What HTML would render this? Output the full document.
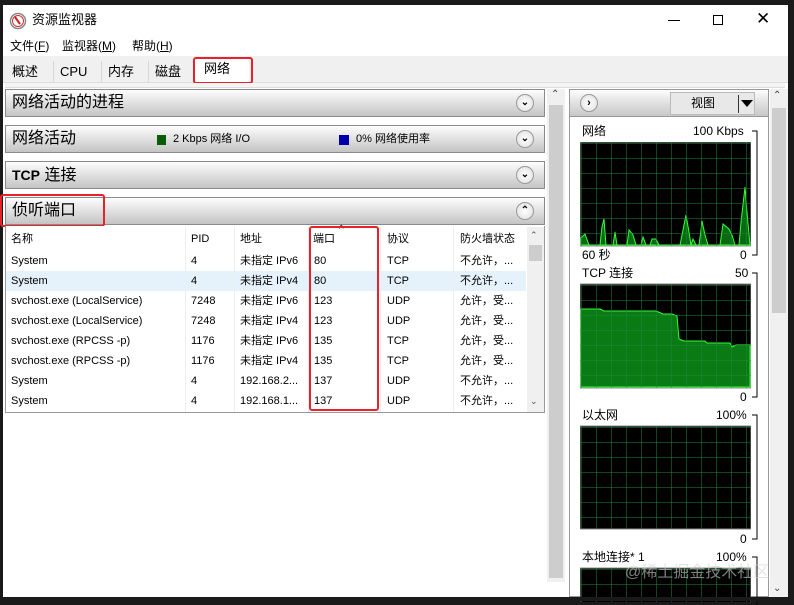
<!DOCTYPE html>
<html><head><meta charset="utf-8"><style>
*{margin:0;padding:0;box-sizing:border-box}
body{width:794px;height:601px;overflow:hidden;background:#1a1a1a;font-family:"Liberation Sans","Noto Sans CJK SC",sans-serif;font-size:12px;color:#000;position:relative;line-height:1.15}
.a{position:absolute}
.win{left:3px;top:5px;width:785px;height:592px;background:#fff}
.hd{position:absolute;left:5px;width:540px;height:28px;border:1px solid #8a8a8a;background:linear-gradient(#fdfdfd,#e6e6e6 40%,#c4c4c4);font-size:16px;line-height:26px;padding:0 0 0 6px}
.cb{position:absolute;right:10px;top:4px;width:18px;height:18px;border-radius:50%;border:1px solid #999;background:radial-gradient(#fff,#ddd);font-size:10px;text-align:center;line-height:16px;font-weight:bold}
.row{position:absolute;left:6px;width:520px;height:20px;font-size:11px;line-height:20px}
.row span{position:absolute}
.red{position:absolute;border:2px solid #e8222a;border-radius:3px}
.lbl{position:absolute;font-size:12px;line-height:14px}
.tab{position:absolute;top:61px;height:21px;font-size:13px;line-height:21px}
</style></head><body>
<div class="a win"></div>
<svg class="a" style="left:9px;top:12px" width="18" height="18"><circle cx="9" cy="9" r="7.5" fill="#fff" stroke="#888" stroke-width="1.5"/><circle cx="9" cy="9" r="5.5" fill="none" stroke="#c33" stroke-width="1"/><path d="M6 5 L11 12" stroke="#c22" stroke-width="2"/></svg>
<div class="a" style="left:32px;top:13px;font-size:13px">资源监视器</div>
<div class="a" style="left:668px;top:20px;width:12px;height:1px;background:#000"></div>
<div class="a" style="left:713px;top:15px;width:10px;height:10px;border:1px solid #000"></div>
<div class="a" style="left:756px;top:9px;font-size:17px;font-weight:300">✕</div>
<div class="a" style="left:10px;top:40px;font-size:12px">文件(<u>F</u>)</div>
<div class="a" style="left:62px;top:40px;font-size:12px">监视器(<u>M</u>)</div>
<div class="a" style="left:132px;top:40px;font-size:12px">帮助(<u>H</u>)</div>
<div class="a" style="left:3px;top:56px;width:785px;height:27px;background:#f0f0f0;border-bottom:1px solid #ddd"></div>
<div class="tab" style="left:5px;width:49px;border-right:1px solid #d8d8d8;padding-left:7px">概述</div>
<div class="tab" style="left:54px;width:48px;border-right:1px solid #d8d8d8;padding-left:6px">CPU</div>
<div class="tab" style="left:102px;width:47px;border-right:1px solid #d8d8d8;padding-left:6px">内存</div>
<div class="tab" style="left:149px;width:44px;padding-left:6px">磁盘</div>
<div class="a" style="left:195px;top:58px;width:54px;height:25px;background:#fff;font-size:13px;line-height:22px;padding-left:9px">网络</div>
<div class="red" style="left:193px;top:57px;width:60px;height:27px"></div>
<div class="a" style="left:5px;top:83px;width:780px;height:5px;background:#f4f4f4;border-bottom:1px solid #ddd"></div>
<div class="hd" style="top:89px">网络活动的进程<div class="cb">⌄</div></div>
<div class="hd" style="top:125px">网络活动
<span class="a" style="left:151px;top:9px;width:9px;height:10px;background:#0a5a0a;border:1px solid #060"></span>
<span class="a" style="left:167px;top:0;font-size:11px">2 Kbps 网络 I/O</span>
<span class="a" style="left:333px;top:9px;width:10px;height:10px;background:#0000aa"></span>
<span class="a" style="left:350px;top:0;font-size:11px">0% 网络使用率</span>
<div class="cb">⌄</div></div>
<div class="hd" style="top:161px"><b style="font-size:14px">TCP</b> 连接<div class="cb">⌄</div></div>
<div class="hd" style="top:197px">侦听端口<div class="cb">⌃</div></div>
<div class="red" style="left:0px;top:194px;width:105px;height:33px"></div>
<div class="a" style="left:5px;top:226px;width:540px;height:187px;border:1px solid #999;border-top:none;background:#fff"></div>
<div class="a" style="left:6px;top:271px;width:520px;height:20px;background:#e5f1fb"></div>
<div class="a" style="left:185px;top:227px;width:1px;height:185px;background:#eee"></div>
<div class="a" style="left:234px;top:227px;width:1px;height:185px;background:#eee"></div>
<div class="a" style="left:308px;top:227px;width:1px;height:185px;background:#eee"></div>
<div class="a" style="left:380px;top:227px;width:1px;height:185px;background:#eee"></div>
<div class="a" style="left:453px;top:227px;width:1px;height:185px;background:#eee"></div>
<div class="a" style="left:527px;top:227px;width:17px;height:185px;background:#f0f0f0"></div>
<div class="a" style="left:529px;top:245px;width:13px;height:16px;background:#cdcdcd"></div>
<div class="a" style="left:530px;top:230px;font-size:9px;color:#555">⌃</div>
<div class="a" style="left:530px;top:396px;font-size:9px;color:#555">⌄</div>
<div class="row" style="top:229px"><span style="left:5px">名称</span><span style="left:185px">PID</span><span style="left:234px">地址</span><span style="left:307px">端口</span><span style="left:333px;top:-9px;font-size:10px">^</span><span style="left:381px">协议</span><span style="left:454px">防火墙状态</span></div>
<div class="row" style="top:251px"><span style="left:5px">System</span><span style="left:185px">4</span><span style="left:234px">未指定 IPv6</span><span style="left:308px">80</span><span style="left:381px">TCP</span><span style="left:454px">不允许，...</span></div>
<div class="row" style="top:271px"><span style="left:5px">System</span><span style="left:185px">4</span><span style="left:234px">未指定 IPv4</span><span style="left:308px">80</span><span style="left:381px">TCP</span><span style="left:454px">不允许，...</span></div>
<div class="row" style="top:291px"><span style="left:5px">svchost.exe (LocalService)</span><span style="left:185px">7248</span><span style="left:234px">未指定 IPv6</span><span style="left:308px">123</span><span style="left:381px">UDP</span><span style="left:454px">允许，受...</span></div>
<div class="row" style="top:311px"><span style="left:5px">svchost.exe (LocalService)</span><span style="left:185px">7248</span><span style="left:234px">未指定 IPv4</span><span style="left:308px">123</span><span style="left:381px">UDP</span><span style="left:454px">允许，受...</span></div>
<div class="row" style="top:331px"><span style="left:5px">svchost.exe (RPCSS -p)</span><span style="left:185px">1176</span><span style="left:234px">未指定 IPv6</span><span style="left:308px">135</span><span style="left:381px">TCP</span><span style="left:454px">允许，受...</span></div>
<div class="row" style="top:351px"><span style="left:5px">svchost.exe (RPCSS -p)</span><span style="left:185px">1176</span><span style="left:234px">未指定 IPv4</span><span style="left:308px">135</span><span style="left:381px">TCP</span><span style="left:454px">允许，受...</span></div>
<div class="row" style="top:371px"><span style="left:5px">System</span><span style="left:185px">4</span><span style="left:234px">192.168.2...</span><span style="left:308px">137</span><span style="left:381px">UDP</span><span style="left:454px">不允许，...</span></div>
<div class="row" style="top:391px"><span style="left:5px">System</span><span style="left:185px">4</span><span style="left:234px">192.168.1...</span><span style="left:308px">137</span><span style="left:381px">UDP</span><span style="left:454px">不允许，...</span></div>
<div class="red" style="left:309px;top:226px;width:70px;height:185px"></div>
<div class="a" style="left:547px;top:89px;width:18px;height:493px;background:#f0f0f0"></div>
<div class="a" style="left:549px;top:105px;width:14px;height:473px;background:#cdcdcd"></div>
<div class="a" style="left:551px;top:89px;font-size:10px;color:#444">⌃</div>
<div class="a" style="left:569px;top:89px;width:200px;height:508px;border:1px solid #999;background:#fff"></div>
<div class="a" style="left:570px;top:90px;width:198px;height:27px;background:linear-gradient(#fdfdfd,#e6e6e6 40%,#c8c8c8);border-bottom:1px solid #999"></div>
<div class="a" style="left:580px;top:94px;width:18px;height:18px;border-radius:50%;border:1px solid #999;background:radial-gradient(#fff,#ddd);font-size:11px;font-weight:bold;text-align:center;line-height:16px">›</div>
<div class="a" style="left:670px;top:92px;width:85px;height:23px;background:#e8e8e8;border:1px solid #bbb;font-size:12px;line-height:21px;padding-left:20px">视图</div>
<div class="a" style="left:738px;top:95px;width:1px;height:18px;background:#333"></div>
<div class="a" style="left:741px;top:100px;width:0;height:0;border-left:6px solid transparent;border-right:6px solid transparent;border-top:7px solid #000"></div>
<div class="a" style="left:770px;top:89px;width:18px;height:508px;background:#f0f0f0"></div>
<div class="a" style="left:772px;top:108px;width:14px;height:205px;background:#cdcdcd"></div>
<div class="a" style="left:773px;top:90px;font-size:10px;color:#444">⌃</div>
<div class="a" style="left:773px;top:583px;font-size:10px;color:#444">⌄</div>

<div class="lbl" style="left:582px;top:124px">网络</div><div class="lbl" style="left:693px;top:124px">100 Kbps</div>
<div class="lbl" style="left:582px;top:248px">60 秒</div><div class="lbl" style="left:740px;top:248px">0</div>
<div class="lbl" style="left:582px;top:266px">TCP 连接</div><div class="lbl" style="left:735px;top:266px">50</div>
<div class="lbl" style="left:740px;top:390px">0</div>
<div class="lbl" style="left:582px;top:408px">以太网</div><div class="lbl" style="left:716px;top:408px">100%</div>
<div class="lbl" style="left:740px;top:532px">0</div>
<div class="lbl" style="left:582px;top:550px">本地连接* 1</div><div class="lbl" style="left:716px;top:550px">100%</div>
<svg class="a" style="left:750px;top:125px" width="10" height="480"><path d="M2 6H7V130H2M2 148H7V272H2M2 290H7V414H2M2 432H7V480" fill="none" stroke="#000"/></svg>

<svg class="a" style="left:580px;top:142px" width="171" height="460">
<defs><pattern id="g" x="1" y="1" width="15" height="15" patternUnits="userSpaceOnUse"><path d="M0 0H15M0 0V15" stroke="#1f8a3a" stroke-width="1" fill="none"/></pattern></defs>
<g>
<rect x="0" y="0" width="171" height="104" fill="#000" stroke="#888"/>
<path d="M1 103 L1 96 L5 92 L9 103 L20 103 L22 85 L24 77 L26 103 L33 103 L35 90 L37 103 L47 103 L49 88 L53 93 L56 103 L61 103 L63 95 L66 103 L70 103 L72 97 L76 97 L79 103 L100 103 L104 83 L106 73 L109 90 L111 103 L113 97 L116 103 L119 103 L121 88 L122 79 L125 93 L128 103 L140 103 L143 82 L149 87 L152 93 L155 103 L159 103 L161 80 L165 45 L167 70 L170 103 Z" fill="#0a6a14" stroke="#3f3" stroke-width="1"/>
<rect x="0" y="0" width="171" height="104" fill="url(#g)"/>
</g>
<g transform="translate(0,142)">
<rect x="0" y="0" width="171" height="104" fill="#000" stroke="#888"/>
<path d="M1 103 L1 25 L20 25 L24 27 L76 27 L83 30 L92 30 L97 32 L99 55 L104 57 L125 57 L127 59 L150 59 L152 63 L156 61 L170 61 L170 103 Z" fill="#0a7a14" stroke="#3f3"/>
<rect x="0" y="0" width="171" height="104" fill="url(#g)"/>
</g>
<g transform="translate(0,284)">
<rect x="0" y="0" width="171" height="103" fill="#000" stroke="#888"/>
<rect x="0" y="0" width="171" height="103" fill="url(#g)"/>
</g>
<g transform="translate(0,426)">
<rect x="0" y="0" width="171" height="40" fill="#000" stroke="#888"/>
<rect x="0" y="0" width="171" height="40" fill="url(#g)"/>
</g>
</svg>
<div class="a" style="left:625px;top:564px;font-size:16px;color:rgba(210,210,210,0.6)">@稀土掘金技术社区</div>
<div class="a" style="left:0;top:597px;width:794px;height:4px;background:#1a1a1a"></div>
</body></html>
